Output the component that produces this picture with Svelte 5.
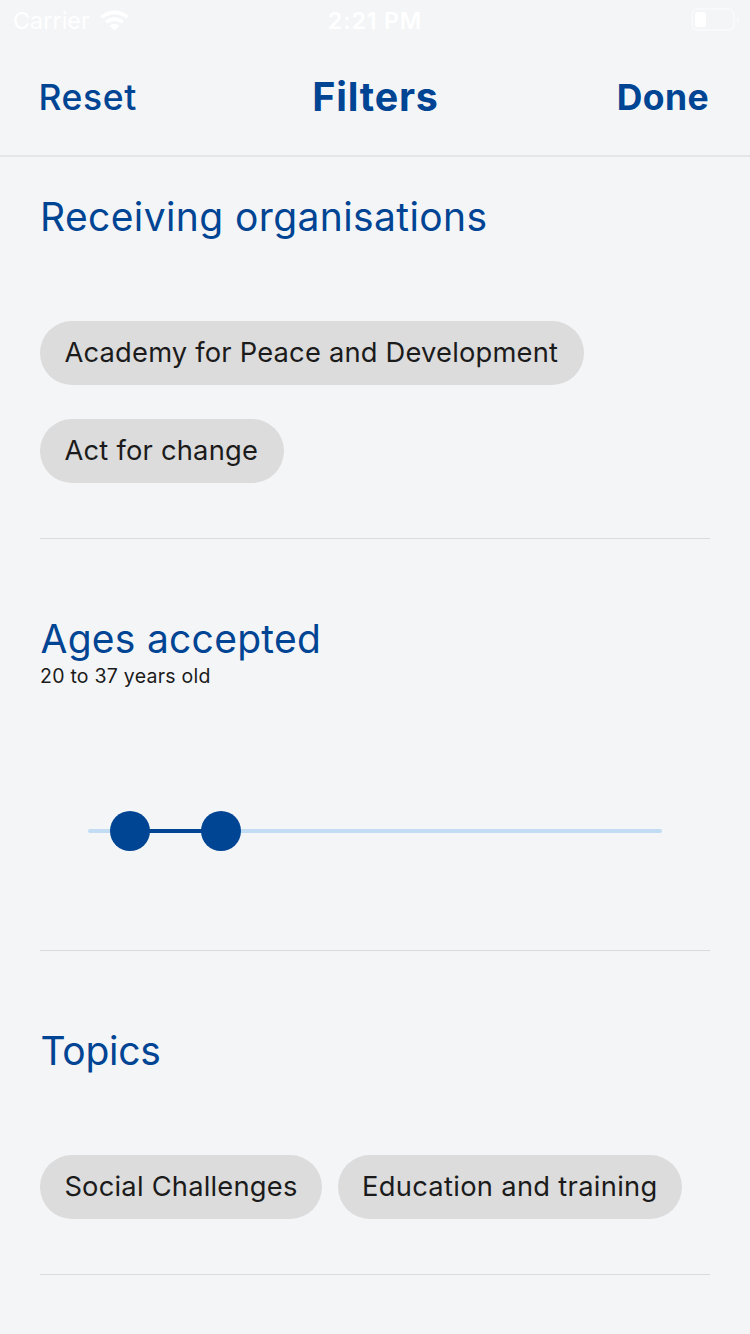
<script>
  const organisations = [
    { label: 'Academy for Peace and Development', width: 544, inset: 24.5, tracking: 0.2 },
    { label: 'Act for change', width: 244, inset: 24.5, tracking: 0.22 }
  ];
  const topics = [
    { label: 'Social Challenges', width: 282, inset: 24.4, tracking: 0.22 },
    { label: 'Education and training', width: 344, inset: 24, tracking: 0.31 }
  ];
  const ages = { from: 20, to: 37, start: 42.4, end: 132.8 };
</script>

{#snippet chips(list)}
  <div class="chips">
    {#each list as chip}
      <button
        class="chip"
        style="width: {chip.width}px; padding-left: {chip.inset}px; letter-spacing: {chip.tracking}px"
      >{chip.label}</button>
    {/each}
  </div>
{/snippet}

<div class="screen">
  <div class="status">
    <div class="carrier">
      <span>Carrier</span>
      <svg class="wifi" width="30" height="22" viewBox="0 0 30 22" fill="#fff">
        <path d="M0.2 7.1 A20.8 20.8 0 0 1 28.8 7.1 L26.1 9.8 A17 17 0 0 0 2.9 9.8 Z" />
        <path d="M4.9 11.9 A14.2 14.2 0 0 1 24.1 11.9 L21.4 14.6 A10.4 10.4 0 0 0 7.6 14.6 Z" />
        <path d="M9.6 16.7 A7.4 7.4 0 0 1 19.4 16.7 L14.5 21.5 Z" />
      </svg>
    </div>
    <span class="time">2:21 PM</span>
    <svg class="battery" width="50" height="24" viewBox="0 0 50 24">
      <rect x="2" y="2" width="42" height="21" rx="5.5" fill="none" stroke="#fff" stroke-opacity="0.4" stroke-width="2" />
      <rect x="5" y="5" width="11" height="15" rx="2.6" fill="#fff" />
      <path d="M47 8.5 C49.8 10 49.8 14.5 47 16 Z" fill="#fff" fill-opacity="0.45" />
    </svg>
  </div>

  <header>
    <button class="reset">Reset</button>
    <h1>Filters</h1>
    <button class="done">Done</button>
  </header>

  <main>
    <section class="organisations">
      <h2>Receiving organisations</h2>
      {@render chips(organisations)}
    </section>

    <section class="ages">
      <h2>Ages accepted</h2>
      <p>{ages.from} to {ages.to} years old</p>
      <div class="slider">
        <div class="track"></div>
        <div class="range" style="left: {ages.start}px; width: {ages.end - ages.start}px"></div>
        <div class="thumb" style="left: {ages.start}px"></div>
        <div class="thumb" style="left: {ages.end}px"></div>
      </div>
    </section>

    <section class="topics">
      <h2>Topics</h2>
      {@render chips(topics)}
    </section>
  </main>
</div>

<style>
  :global(body) {
    background: #f4f5f7;
  }

  .screen {
    box-sizing: border-box;
    width: 750px;
    height: 1334px;
    overflow: hidden;
    background: #f4f5f7;
    font-family: Inter, "Open Sans", sans-serif;
    color: #1b1b1b;
  }

  button {
    margin: 0;
    padding: 0;
    border: 0;
    background: none;
    font-family: inherit;
    color: inherit;
    text-align: left;
  }

  .status {
    display: grid;
    grid-template-columns: 1fr auto 1fr;
    height: 40px;
    color: #fff;
    font-size: 23.3px;
    line-height: 41px;
  }

  .carrier {
    display: flex;
    padding-left: 13px;
    letter-spacing: 0.07px;
  }

  .wifi {
    margin: 9px 0 0 10.5px;
  }

  .time {
    font-weight: 600;
    letter-spacing: 0.8px;
  }

  .battery {
    justify-self: end;
    margin: 7px 10px 0 0;
  }

  header {
    box-sizing: border-box;
    display: grid;
    grid-template-columns: 1fr auto 1fr;
    align-items: start;
    height: 117px;
    padding: 33px 41px 0 38px;
    border-bottom: 2px solid #e3e5e7;
    color: #004494;
  }

  .reset {
    justify-self: start;
    padding-left: 0.5px;
    font-size: 35.5px;
    line-height: 50px;
    font-weight: 500;
    letter-spacing: 0.6px;
  }

  h1 {
    margin: 0 -2px 0 2px;
    font-size: 39.4px;
    line-height: 48px;
    font-weight: 700;
    letter-spacing: 0.8px;
  }

  .done {
    justify-self: end;
    font-size: 35.5px;
    line-height: 50px;
    font-weight: 700;
    letter-spacing: 0.4px;
  }

  main {
    padding: 0 40px;
  }

  section {
    box-sizing: border-box;
    border-bottom: 1px solid #d9dbdd;
  }

  .organisations {
    height: 382px;
    padding-top: 36px;
  }

  .ages {
    height: 412px;
    padding-top: 76px;
  }

  .topics {
    height: 324px;
    padding-top: 76px;
  }

  h2 {
    margin: 0;
    font-size: 39px;
    line-height: 48px;
    font-weight: 400;
    color: #004494;
  }

  .organisations h2 {
    letter-spacing: 0.393px;
  }

  .ages h2 {
    padding-left: 0.5px;
    letter-spacing: 0.26px;
  }

  .topics h2 {
    padding-left: 0.4px;
    letter-spacing: -0.25px;
  }

  .chips {
    display: flex;
    flex-wrap: wrap;
    gap: 34px 16px;
    margin-top: 80px;
  }

  .chip {
    box-sizing: border-box;
    height: 64px;
    border-radius: 32px;
    background: #dcdcdc;
    font-size: 27.3px;
    line-height: 64px;
    white-space: nowrap;
  }

  p {
    margin: 0;
    font-size: 19.5px;
    line-height: 27px;
    letter-spacing: 0.25px;
  }

  .slider {
    position: relative;
    height: 40px;
    margin: 120.7px 48px 0;
  }

  .track,
  .range {
    position: absolute;
    top: 18px;
    height: 4px;
  }

  .track {
    left: 0;
    right: 0;
    border-radius: 2px;
    background: #c1dcf3;
  }

  .range {
    background: #004494;
  }

  .thumb {
    position: absolute;
    top: 0;
    width: 40px;
    height: 40px;
    margin-left: -20px;
    border-radius: 50%;
    background: #004494;
  }
</style>
